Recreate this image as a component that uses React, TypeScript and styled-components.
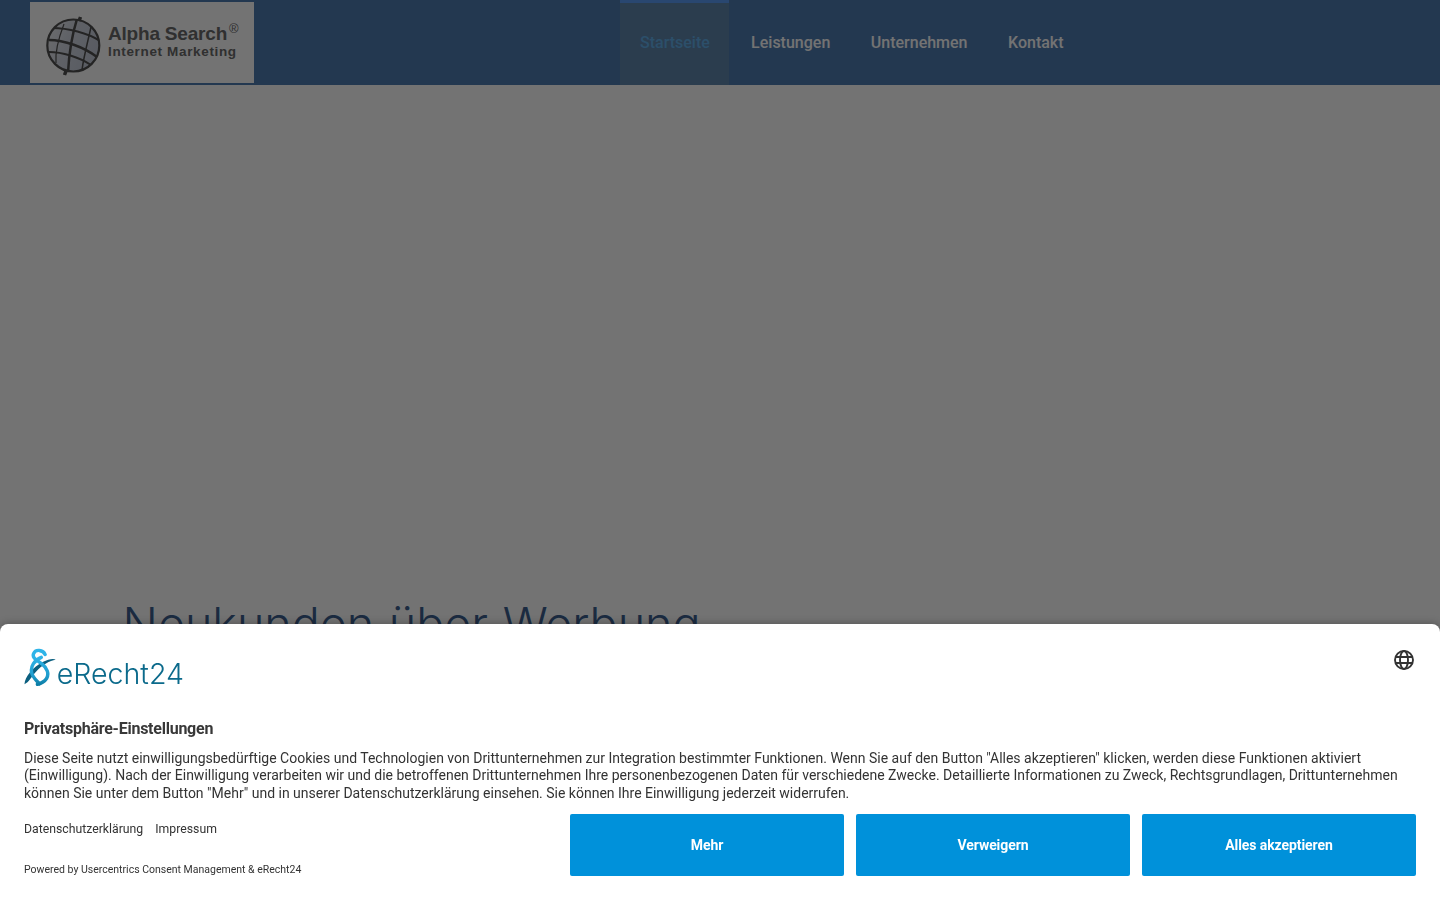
import React from "react";
import styled, { createGlobalStyle } from "styled-components";

const GlobalStyle = createGlobalStyle`
    html, body {
        margin: 0;
        padding: 0;
        height: 100%;
        overflow: hidden;
        background: #ffffff;
        font-family: Roboto, "Liberation Sans", sans-serif;
    }
`;

const Header = styled.header`
    height: 85px;
    background: #4f7cb2;
    display: flex;
    padding-left: 30px;
    box-sizing: border-box;
`;

const LogoBox = styled.div`
    width: 224px;
    height: 81px;
    margin-top: 2px;
    background: #ffffff;
    display: flex;
    align-items: flex-start;
    padding: 13px 0 0 14px;
    box-sizing: border-box;
    gap: 4px;
`;

const LogoText = styled.div`
    display: flex;
    flex-direction: column;
    font-family: "Liberation Sans", Arial, sans-serif;
    font-weight: 700;
    color: #6a6a6a;
    margin-top: 8px;
`;

const LogoTitle = styled.span`
    font-size: 19px;
    line-height: 21px;
    letter-spacing: -0.2px;
    white-space: nowrap;
    sup {
        font-size: 13px;
        font-weight: 400;
        line-height: 0;
        margin-left: 2px;
        vertical-align: 7px;
    }
`;

const LogoSub = styled.span`
    font-size: 13.5px;
    line-height: 15px;
    letter-spacing: 0.65px;
    white-space: nowrap;
`;

const Nav = styled.nav`
    display: flex;
    margin-left: 366px;
`;

const NavItem = styled.a<{ $active?: boolean }>`
    display: flex;
    align-items: center;
    box-sizing: border-box;
    height: 85px;
    padding: 0 ${({ $active }) => ($active ? "19.5px" : "20.5px")} 1px 20px;
    margin-right: ${({ $active }) => ($active ? "1.8px" : "0")};
    font-size: 16px;
    font-weight: 500;
    color: ${({ $active }) => ($active ? "#62b0ea" : "#ffffff")};
    background: ${({ $active }) => ($active ? "#6087ae" : "transparent")};
    box-shadow: ${({ $active }) => ($active ? "inset 0 3px 0 #5c9ef8" : "none")};
`;

const Hero = styled.main`
    padding: 512px 0 0 122.5px;
`;

const HeroTitle = styled.h1`
    margin: 0;
    font-family: Inter, Roboto, sans-serif;
    font-size: 46.6px;
    line-height: 54px;
    font-weight: 300;
    word-spacing: 1.5px;
    color: #3d6190;
`;

const Overlay = styled.div`
    position: fixed;
    inset: 0;
    background: rgba(0, 0, 0, 0.55);
`;

const Modal = styled.section`
    position: fixed;
    left: 0;
    right: 0;
    bottom: 0;
    height: 276px;
    box-sizing: border-box;
    padding: 24px;
    background: #ffffff;
    border-radius: 8px 8px 0 0;
    box-shadow: 0 0 8px rgba(0, 0, 0, 0.3);
    color: #333333;
    display: flex;
    flex-direction: column;
`;

const ModalTop = styled.div`
    display: flex;
    justify-content: space-between;
    height: 38px;
`;

const BrandRow = styled.div`
    display: flex;
    align-items: flex-end;
    width: 160px;
`;

const BrandName = styled.span`
    font-family: Inter, Roboto, sans-serif;
    font-size: 28.6px;
    line-height: 30px;
    font-weight: 350;
    color: #0b6a8b;
    margin-bottom: -3px;
    white-space: nowrap;
`;

const Title = styled.h2`
    margin: 33px 0 0;
    font-size: 16px;
    line-height: 20px;
    font-weight: 700;
    letter-spacing: -0.24px;
    color: #383838;
`;

const Body = styled.p`
    margin: 10.9px 0 0;
    font-size: 14px;
    line-height: 17.5px;
    letter-spacing: -0.004px;
    color: #333333;
`;

const Footer = styled.div`
    display: flex;
    justify-content: space-between;
    margin-top: 12px;
`;

const FooterLinks = styled.div`
    display: flex;
    flex-direction: column;
    justify-content: flex-start;
`;

const Links = styled.div`
    display: flex;
    gap: 12px;
    font-size: 12.25px;
    line-height: 16px;
    margin-top: 7px;
`;

const Powered = styled.div`
    font-size: 10.5px;
    line-height: 14px;
    margin-top: 26px;
`;

const Buttons = styled.div`
    display: flex;
    gap: 12px;
`;

const Button = styled.button`
    width: 274px;
    height: 62px;
    border: 0;
    border-radius: 2px;
    background: #0091da;
    color: #ffffff;
    font-family: Roboto, sans-serif;
    font-size: 14px;
    font-weight: 700;
    letter-spacing: -0.08px;
`;

const LanguageButton = styled.span`
    display: block;
    width: 20px;
    height: 20px;
    margin: 2px 2px 0 0;
`;

const GlobeLogo = () => (
    <svg width="60" height="62" viewBox="0 0 60 62" fill="none">
        <defs>
            <clipPath id="ball">
                <circle cx="29.3" cy="30.5" r="26" />
            </clipPath>
            <linearGradient id="ballFill" x1="0" y1="0" x2="1" y2="0.4">
                <stop offset="0" stopColor="#f4f4f6" />
                <stop offset="0.45" stopColor="#d4d9e4" />
                <stop offset="1" stopColor="#c6ccda" />
            </linearGradient>
        </defs>
        <circle cx="29.3" cy="30.5" r="26" fill="url(#ballFill)" />
        <g clipPath="url(#ball)" stroke="#505050" fill="none">
            <path d="M33 4 C28 20 25 38 24 58" strokeWidth="2.5" />
            <path d="M20 9 C15 22 11 36 12 48" strokeWidth="1.2" />
            <path d="M47 12 C44 26 40 40 38 55" strokeWidth="1.5" />
            <path d="M8 13 C24 13 44 18 56 26" strokeWidth="2" />
            <path d="M5 25 C20 25 40 32 53 42" strokeWidth="2.5" />
            <path d="M5 37 C18 37 35 42 47 50" strokeWidth="2" />
        </g>
        <circle cx="29.3" cy="30.5" r="26" stroke="#505050" strokeWidth="2.2" />
        <path d="M36.5 2 L35 6 M20.5 60 L22 56" stroke="#505050" strokeWidth="3.5" />
    </svg>
);

const ErechtMark = () => (
    <svg width="34" height="38" viewBox="0 0 34 38" fill="none">
        <defs>
            <linearGradient id="helix" gradientUnits="userSpaceOnUse" x1="0" y1="8" x2="0" y2="37">
                <stop offset="0" stopColor="#2fb4e8" />
                <stop offset="0.7" stopColor="#1f9ccd" />
                <stop offset="1" stopColor="#0e7ea6" />
            </linearGradient>
        </defs>
        <path
            d="M0.5 37 C1 29 9 19 20 13.5 C25 11 31 9.5 33 11.5 C27 12 19 17 12.5 24 C8 29 5 35 0.5 37 Z"
            fill="#0b5f7f"
        />
        <path
            d="M22 6 C20 1 12 0 10 5 C8 10 14 12 19 16 C24 20 26.5 26 23.5 31 C21.5 34 18 36 14 37"
            stroke="url(#helix)"
            strokeWidth="3.6"
            strokeLinecap="round"
        />
        <path
            d="M18 9 C11 12 6.5 18 8 25 C9 30 13 33 16 36.5"
            stroke="url(#helix)"
            strokeWidth="3.6"
            strokeLinecap="round"
        />
    </svg>
);

const LanguageIcon = () => (
    <LanguageButton>
        <svg width="20" height="20" viewBox="0 0 20 20" fill="none" stroke="#333" strokeWidth="1.9">
            <circle cx="10" cy="10" r="9" />
            <ellipse cx="10" cy="10" rx="4" ry="9" />
            <path d="M1.5 7 H18.5 M1.5 13 H18.5" />
        </svg>
    </LanguageButton>
);

const App: React.FC = () => {
    return (
        <>
            <GlobalStyle />
            <Header>
                <LogoBox>
                    <GlobeLogo />
                    <LogoText>
                        <LogoTitle>Alpha Search<sup>®</sup></LogoTitle>
                        <LogoSub>Internet Marketing</LogoSub>
                    </LogoText>
                </LogoBox>
                <Nav>
                    <NavItem $active>Startseite</NavItem>
                    <NavItem>Leistungen</NavItem>
                    <NavItem>Unternehmen</NavItem>
                    <NavItem>Kontakt</NavItem>
                </Nav>
            </Header>
            <Hero>
                <HeroTitle>Neukunden über Werbung</HeroTitle>
            </Hero>
            <Overlay />
            <Modal>
                <ModalTop>
                    <BrandRow>
                        <ErechtMark />
                        <BrandName>eRecht24</BrandName>
                    </BrandRow>
                    <LanguageIcon />
                </ModalTop>
                <Title>Privatsphäre-Einstellungen</Title>
                <Body>
                    Diese Seite nutzt einwilligungsbedürftige Cookies und Technologien von Drittunternehmen zur Integration bestimmter Funktionen. Wenn Sie auf den Button "Alles akzeptieren" klicken, werden diese Funktionen aktiviert (Einwilligung). Nach der Einwilligung verarbeiten wir und die betroffenen Drittunternehmen Ihre personenbezogenen Daten für verschiedene Zwecke. Detaillierte Informationen zu Zweck, Rechtsgrundlagen, Drittunternehmen können Sie unter dem Button "Mehr" und in unserer Datenschutzerklärung einsehen. Sie können Ihre Einwilligung jederzeit widerrufen.
                </Body>
                <Footer>
                    <FooterLinks>
                        <Links>
                            <span>Datenschutzerklärung</span>
                            <span>Impressum</span>
                        </Links>
                        <Powered>Powered by Usercentrics Consent Management &amp; eRecht24</Powered>
                    </FooterLinks>
                    <Buttons>
                        <Button>Mehr</Button>
                        <Button>Verweigern</Button>
                        <Button>Alles akzeptieren</Button>
                    </Buttons>
                </Footer>
            </Modal>
        </>
    );
};

export default App;
